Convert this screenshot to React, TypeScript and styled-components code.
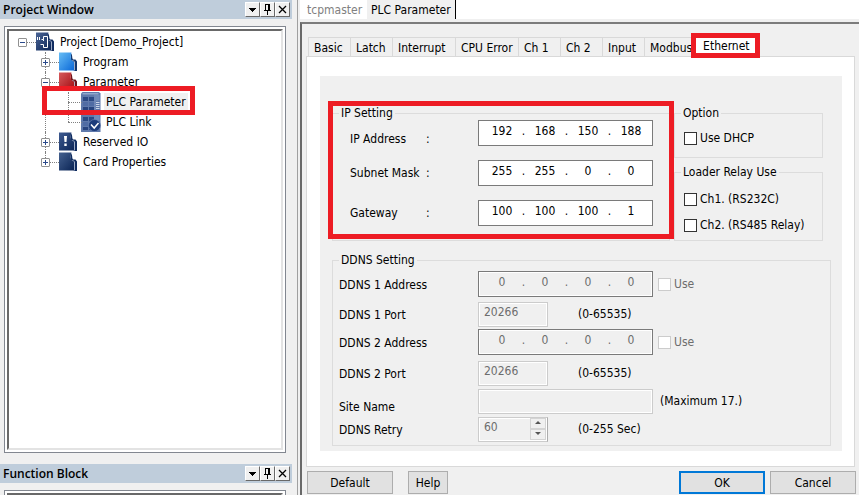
import React from "react";
import styled, { createGlobalStyle, css } from "styled-components";

const Global = createGlobalStyle`
  * { box-sizing: border-box; }
  html, body, #root { height: 100%; }
  body {
    margin: 0;
    background: #f0f0f0;
    color: #000;
    font: 12px/14px "DejaVu Sans Condensed", "DejaVu Sans", sans-serif;
    overflow: hidden;
  }
  button, input { font: inherit; color: inherit; }
`;

const Window = styled.div`
  display: flex;
  height: 100%;
`;

/* ---------- docked panels ---------- */

const Sidebar = styled.aside`
  flex: 0 0 298px;
  display: flex;
  flex-direction: column;
  gap: 11px;
  padding-right: 5px;
  border-right: 1px solid #a0a0a0;
`;

const Dock = styled.section<{ $collapsed?: boolean }>`
  flex: ${(p) => (p.$collapsed ? "0 0 31px" : "1 1 0")};
  min-height: 0;
  overflow: hidden;
  display: flex;
  flex-direction: column;
`;

const DockTitle = styled.header`
  flex: none;
  display: flex;
  align-items: center;
  height: 19px;
  padding: 0 2px 0 3px;
  background: #bfcddb;

  h2 {
    flex: 1;
    margin: 0;
    font: 600 12px/18px "Open Sans", sans-serif;
  }
`;

const DockButton = styled.button`
  display: flex;
  align-items: center;
  justify-content: center;
  width: 15px;
  height: 15px;
  padding: 0;
  background: #f0f0f0;
  border: 1px solid;
  border-color: #fff #696969 #696969 #fff;
`;

const DockFrame = styled.div`
  flex: 1;
  min-height: 0;
  margin: 7px 6px 0 4px;
  padding: 2px;
  background: #fff;
  border: 1px solid #828790;
`;

const DockBody = styled.div`
  height: 100%;
  min-height: 20px;
  padding: 1px 2px;
  background: #fff;
  border: 2px solid;
  border-color: #696969 #e3e3e3 #e3e3e3 #696969;
`;

/* ---------- project tree ---------- */

const Tree = styled.ul`
  margin: 0;
  padding: 0;
  list-style: none;
`;

const TreeRow = styled.li`
  display: flex;
  align-items: center;
  height: 20px;
`;

type Line = "none" | "full" | "upper" | "lower";

const Guide = styled.span<{ $line: Line; $branch?: boolean }>`
  position: relative;
  flex: 0 0 23px;
  height: 20px;
  display: flex;
  align-items: center;
  justify-content: center;

  &::before {
    content: "";
    position: absolute;
    left: 11px;
    top: ${(p) => (p.$line === "lower" ? "10px" : "0")};
    bottom: ${(p) => (p.$line === "upper" ? "10px" : "0")};
    border-left: 1px dotted #808080;
    display: ${(p) => (p.$line === "none" ? "none" : "block")};
  }
  &::after {
    content: "";
    position: absolute;
    left: 11px;
    right: -2px;
    top: 10px;
    border-top: 1px dotted #808080;
    display: ${(p) => (p.$branch ? "block" : "none")};
  }
`;

const Expander = styled.button`
  position: relative;
  z-index: 1;
  display: flex;
  width: 9px;
  height: 9px;
  padding: 0;
  background: #fff;
  border: 1px solid #919191;
  border-radius: 1px;
`;

const NodeIcon = styled.svg`
  flex: none;
  width: 20px;
  height: 20px;
  margin-left: 1px;
`;

const NodeLabel = styled.span<{ $selected?: boolean }>`
  margin-left: 3px;
  padding: 2px;
  white-space: nowrap;
  background: ${(p) => (p.$selected ? "#f0f0f0" : "transparent")};
`;

const Highlight = styled.span<{ $inset: string }>`
  position: absolute;
  inset: ${(p) => p.$inset};
  border: 5px solid #ed1c24;
  pointer-events: none;
  z-index: 2;
`;

const Marked = styled.div`
  position: relative;
`;

/* ---------- document area ---------- */

const Workspace = styled.main`
  flex: 1;
  min-width: 0;
  display: flex;
  flex-direction: column;
  padding-left: 2px;
  background: #f0f0f0;
`;

const DocTabs = styled.nav`
  flex: none;
  display: flex;
  height: 19px;
  margin-bottom: 3px;
  padding-left: 3px;
  background: #fff;
`;

const DocTab = styled.button<{ $active?: boolean }>`
  padding: 0 4px;
  border: 0;
  background: ${(p) => (p.$active ? "#f0f0f0" : "#fff")};
  border-right: 1px solid ${(p) => (p.$active ? "#000" : "#fff")};
  color: ${(p) => (p.$active ? "#000" : "#808080")};
`;

const Dialog = styled.form`
  flex: 1;
  min-height: 0;
  display: flex;
  flex-direction: column;
  padding: 13px 4px 1px 4px;
  border: 2px solid #696969;
  border-top-color: #7c7c7c;
  border-width: 2px 0 0 2px;
`;

const TabStrip = styled.div`
  display: flex;
  height: 19px;
  padding-left: 2px;
`;

const Tab = styled.button<{ $active?: boolean; $wide?: boolean }>`
  min-width: ${(p) => (p.$wide ? 63 : 42)}px;
  padding: 2px 5px 0;
  text-align: left;
  white-space: nowrap;
  background: #f0f0f0;
  border: 1px solid #d9d9d9;
  border-width: 1px 0 0 1px;
  ${(p) =>
    p.$active &&
    css`
      position: relative;
      height: 20px;
      margin-left: -4px;
      padding: 0 7px 4px 9px;
      background: #fff;
    `}
`;

const TabPage = styled.div`
  flex: 1;
  min-height: 0;
  padding: 19px 12px 15px 13px;
  background: #fff;
  border: 1px solid #d9d9d9;
`;

const Sheet = styled.div`
  height: 100%;
  padding: 30px 11px 5px 12px;
  background: #f0f0f0;
`;

const UpperGroups = styled.div`
  display: grid;
  grid-template-columns: 1fr 149px;
  column-gap: 4px;
  margin-right: 8px;
`;

const SideGroups = styled.div`
  display: grid;
  grid-template-rows: 52px 76px;
  row-gap: 7px;
`;

const Group = styled.fieldset<{ $top?: number }>`
  min-width: 0;
  height: 100%;
  margin: 0;
  padding: ${(p) => p.$top ?? 0}px 0 0;
  border: 1px solid #dcdcdc;
`;

const Legend = styled.legend`
  margin-left: 6px;
  padding: 0 2px;
  line-height: 14px;
`;

const AddressRow = styled.div`
  display: grid;
  grid-template-columns: 76px 52px 175px;
  height: 26px;
  margin: 0 0 14px 17px;
  align-items: center;
`;

const AddressLabel = styled.span<{ $low?: boolean }>`
  align-self: ${(p) => (p.$low ? "end" : "center")};
  white-space: nowrap;
`;

const DdnsWrap = styled.div`
  height: 193px;
  margin-top: 12px;
`;

const DdnsGrid = styled.div`
  display: grid;
  grid-template-columns: 139px 1fr;
  grid-template-rows: 30px 28px 31px 28px 28px 28px;
  padding-left: 6px;
`;

const DdnsLabel = styled.label<{ $low?: boolean }>`
  align-self: ${(p) => (p.$low ? "end" : "start")};
  line-height: ${(p) => (p.$low ? "18px" : "28px")};
`;

const DdnsCell = styled.div<{ $gap: number }>`
  display: flex;
  align-items: center;
  align-self: start;
  gap: ${(p) => p.$gap}px;
  height: 26px;
  white-space: nowrap;
`;

const IpBox = styled.span<{ $disabled?: boolean }>`
  display: flex;
  flex: 0 0 175px;
  min-width: 0;
  height: 26px;
  padding: 0 0 4px 3px;
  border: 1px solid #7a7a7a;
  background: ${(p) => (p.$disabled ? "#f0f0f0" : "#fff")};
  box-shadow: inset 0 0 0 1px #fff;
  color: ${(p) => (p.$disabled ? "#6d6d6d" : "#000")};
  line-height: 20px;

  i {
    flex: 0 0 3px;
    min-width: 0;
    font-style: normal;
    display: flex;
    justify-content: center;
  }
`;

const Octet = styled.input`
  flex: 0 0 40px;
  width: 40px;
  height: 20px;
  padding: 0;
  border: 0;
  background: transparent;
  text-align: center;
`;

const TextBox = styled.input<{ $wide?: boolean }>`
  width: ${(p) => (p.$wide ? 175 : 70)}px;
  height: 25px;
  padding: 0 5px 4px;
  border: 1px solid #ccc;
  background: #f0f0f0;
  box-shadow: inset 0 0 0 1px #fff;
  color: #6d6d6d;
`;

const Spinner = styled.span`
  display: flex;
  width: 70px;
  height: 25px;
  padding-right: 1px;
  border: 1px solid #ccc;
  border-right-color: #adadad;
  box-shadow: inset 0 0 0 1px #fff;

  input {
    flex: 1;
    min-width: 0;
    padding: 0 5px 4px;
    border: 0;
    background: transparent;
    color: #6d6d6d;
  }
`;

const SpinButtons = styled.span`
  display: grid;
  grid-template-rows: 11px 11px;
  width: 16px;

  button {
    display: flex;
    align-items: center;
    justify-content: center;
    padding: 0;
    border: 1px solid #d4d4d4;
    background: #f0f0f0;
  }
`;

const Check = styled.label<{ $disabled?: boolean }>`
  display: flex;
  align-items: center;
  gap: 3px;
  height: 26px;
  color: ${(p) => (p.$disabled ? "#6d6d6d" : "#000")};

  input {
    appearance: none;
    width: 13px;
    height: 13px;
    margin: 0;
    background: #fff;
    border: 1px solid ${(p) => (p.$disabled ? "#ccc" : "#333")};
  }
  input:checked {
    background: #333;
  }
`;

const CheckList = styled.div`
  padding-left: 9px;
`;

const Footer = styled.footer`
  display: flex;
  align-items: center;
  gap: 15px;
  height: 23px;
  margin: 4px -1px 0 1px;
`;

const PushButton = styled.button<{ $small?: boolean; $primary?: boolean }>`
  width: ${(p) => (p.$small ? 40 : 86)}px;
  height: 23px;
  padding: 0;
  background: #e1e1e1;
  border: ${(p) => (p.$primary ? "2px solid #0078d7" : "1px solid #adadad")};
`;

const FooterEnd = styled.div`
  display: flex;
  gap: 5px;
  margin-left: auto;
`;

/* ---------- pieces ---------- */

function DockHeader({ title }: { title: string }) {
  return (
    <DockTitle>
      <h2>{title}</h2>
      <DockButton type="button" aria-label={`${title} menu`}>
        <svg width="11" height="11"><path d="M2 4h7v1H8v1H7v1H6v1H5V7H4V6H3V5H2z" /></svg>
      </DockButton>
      <DockButton type="button" aria-label={`Pin ${title}`}>
        <svg width="11" height="11" shapeRendering="crispEdges">
          <path d="M3 0h5v6h1v1H6v4H5V7H2V6h1zM4 1v5h2V1z" fillRule="evenodd" />
        </svg>
      </DockButton>
      <DockButton type="button" aria-label={`Close ${title}`}>
        <svg width="11" height="11"><path d="M2 2l7 7M9 2l-7 7" stroke="#000" strokeWidth="1.3" /></svg>
      </DockButton>
    </DockTitle>
  );
}

type IconKind = "project" | "program" | "parameter" | "plc" | "link" | "reserved" | "card";

const folderColors: Record<string, [string, string, string]> = {
  project: ["#4a6495", "#0c2556", "#102c60"],
  program: ["#67bdf5", "#0a68d8", "#12366e"],
  parameter: ["#d65a5c", "#a30a10", "#6e1219"],
  reserved: ["#3e5b91", "#0c2556", "#102c60"],
  card: ["#45618f", "#0a2455", "#102c60"],
};

function TreeIcon({ kind }: { kind: IconKind }) {
  if (kind === "plc" || kind === "link") {
    return (
      <NodeIcon viewBox="0 0 20 20" aria-hidden="true">
        <path d="M0 1.500 1.500 0H18L19.500 1.500V20H0z" fill="#5f79ab" />
        <path d="M1.500 1h16v1.500h-16z" fill="#93a7cb" />
        <path d="M2 5h5v4H2zM8 5h5v4H8z" fill="#2c4984" />
        <path d="M2 10h5v4H2zM8 10h5v4H8z" fill="#506ca4" />
        <path d="M2 15h5v3H2zM8 15h5v3H8z" fill="#28447f" />
        <path d="M14 3v17" stroke="#8299c3" />
        <path d="M15 10.500h3.500M15 12.500h3.500M15 14.500h3.500M15 16.500h3.500" stroke="#c9d4e8" />
        <path d="M15 3h3.500v6H15z" fill="#718bb9" />
        {kind === "link" && (
          <>
            <circle cx="13.500" cy="13.500" r="6" fill="#1c3c7c" stroke="#6f87b5" strokeWidth=".6" />
            <path d="M10 12.500l3.200 3.500 4.300-5" fill="none" stroke="#fff" strokeWidth="1.500" />
          </>
        )}
      </NodeIcon>
    );
  }
  const [light, dark, back] = folderColors[kind];
  return (
    <NodeIcon viewBox="0 0 20 20" aria-hidden="true">
      <defs>
        <linearGradient id={`fill-${kind}`} x1="0" y1="0" x2="1" y2="1">
          <stop offset="0" stopColor={light} />
          <stop offset="1" stopColor={dark} />
        </linearGradient>
      </defs>
      <path d="M13 1.500C15 3 13.500 7 15.500 7.500h2L19 9.500V19h-3L13 9z" fill={back} />
      <path d="M13.500 8.800h2l1 1.200v8.500" fill="none" stroke="#c3cde0" strokeWidth=".8" />
      <path d="M1 .5H13.500C12.500 4.500 12.500 8 14.500 8.800l1.500 1.400v8.300H1z" fill={`url(#fill-${kind})`} />
      {kind === "project" && (
        <path d="M2.500 5v3M4.500 5v3M6.500 7.500h2v-3h4v11h-4v-3h-3M8.500 7.500v1.500" fill="none" stroke="#fff" />
      )}
      {kind === "reserved" && <path d="M6 4h3l-.5 6h-2zM6.300 11.500h2.400v2.500H6.300z" fill="#fff" />}
    </NodeIcon>
  );
}

interface NodeData {
  label: string;
  icon: IconKind;
  guides: Line[];
  toggle?: "+" | "-";
  selected?: boolean;
}

const nodes: NodeData[] = [
  { label: "Project [Demo_Project]", icon: "project", guides: ["none"], toggle: "-" },
  { label: "Program", icon: "program", guides: ["none", "full"], toggle: "+" },
  { label: "Parameter", icon: "parameter", guides: ["none", "full"], toggle: "-" },
  { label: "PLC Parameter", icon: "plc", guides: ["none", "full", "full"], selected: true },
  { label: "PLC Link", icon: "link", guides: ["none", "full", "upper"] },
  { label: "Reserved IO", icon: "reserved", guides: ["none", "full"], toggle: "+" },
  { label: "Card Properties", icon: "card", guides: ["none", "upper"], toggle: "+" },
];

function ProjectTree() {
  return (
    <Marked>
      <Tree>
        {nodes.map((n) => (
          <TreeRow key={n.label}>
            {n.guides.map((line, i) => {
              const last = i === n.guides.length - 1;
              return (
                <Guide key={i} $line={line} $branch={last}>
                  {last && n.toggle && (
                    <Expander type="button" aria-label={`Toggle ${n.label}`}>
                      <svg width="7" height="7" shapeRendering="crispEdges">
                        <path d={n.toggle === "+" ? "M1 3h5v1H1zM3 1h1v5H3z" : "M1 3h5v1H1z"} fill="#2b4a8b" />
                      </svg>
                    </Expander>
                  )}
                </Guide>
              );
            })}
            <TreeIcon kind={n.icon} />
            <NodeLabel $selected={n.selected}>{n.label}</NodeLabel>
          </TreeRow>
        ))}
      </Tree>
      <Highlight $inset="54px 84px 57px 31px" />
    </Marked>
  );
}

function IpField({ label, parts, disabled }: { label: string; parts: number[]; disabled?: boolean }) {
  return (
    <IpBox $disabled={disabled} role="group" aria-label={label}>
      {parts.map((v, i) => (
        <React.Fragment key={i}>
          {i > 0 && <i>.</i>}
          <Octet defaultValue={v} disabled={disabled} aria-label={`${label} part ${i + 1}`} />
        </React.Fragment>
      ))}
    </IpBox>
  );
}

function CheckBox({ label, disabled }: { label: string; disabled?: boolean }) {
  return (
    <Check $disabled={disabled}>
      <input type="checkbox" disabled={disabled} />
      {label}
    </Check>
  );
}

const addresses = [
  { label: "IP Address", parts: [192, 168, 150, 188] },
  { label: "Subnet Mask", parts: [255, 255, 0, 0] },
  { label: "Gateway", parts: [100, 100, 100, 1] },
];

const tabs = ["Basic", "Latch", "Interrupt", "CPU Error", "Ch 1", "Ch 2", "Input", "Modbus"];

function DdnsSection() {
  return (
    <DdnsWrap>
      <Group $top={4}>
        <Legend>DDNS Setting</Legend>
        <DdnsGrid>
          <DdnsLabel as="span">DDNS 1 Address</DdnsLabel>
          <DdnsCell $gap={5}>
            <IpField label="DDNS 1 Address" parts={[0, 0, 0, 0]} disabled />
            <CheckBox label="Use" disabled />
          </DdnsCell>
          <DdnsLabel htmlFor="port1">DDNS 1 Port</DdnsLabel>
          <DdnsCell $gap={30}>
            <TextBox id="port1" defaultValue="20266" disabled />
            <span>(0-65535)</span>
          </DdnsCell>
          <DdnsLabel as="span">DDNS 2 Address</DdnsLabel>
          <DdnsCell $gap={5}>
            <IpField label="DDNS 2 Address" parts={[0, 0, 0, 0]} disabled />
            <CheckBox label="Use" disabled />
          </DdnsCell>
          <DdnsLabel htmlFor="port2">DDNS 2 Port</DdnsLabel>
          <DdnsCell $gap={30}>
            <TextBox id="port2" defaultValue="20266" disabled />
            <span>(0-65535)</span>
          </DdnsCell>
          <DdnsLabel htmlFor="site" $low>Site Name</DdnsLabel>
          <DdnsCell $gap={7}>
            <TextBox id="site" $wide disabled />
            <span>(Maximum 17.)</span>
          </DdnsCell>
          <DdnsLabel htmlFor="retry">DDNS Retry</DdnsLabel>
          <DdnsCell $gap={30}>
            <Spinner>
              <input id="retry" defaultValue="60" disabled />
              <SpinButtons>
                <button type="button" disabled aria-label="Increase retry">
                  <svg width="6" height="4"><path d="M3 0l3 3H0z" fill="#555" /></svg>
                </button>
                <button type="button" disabled aria-label="Decrease retry">
                  <svg width="6" height="4"><path d="M0 0h6L3 3z" fill="#555" /></svg>
                </button>
              </SpinButtons>
            </Spinner>
            <span>(0-255 Sec)</span>
          </DdnsCell>
        </DdnsGrid>
      </Group>
    </DdnsWrap>
  );
}

export default function App() {
  return (
    <>
      <Global />
      <Window>
        <Sidebar>
          <Dock>
            <DockHeader title="Project Window" />
            <DockFrame>
              <DockBody>
                <ProjectTree />
              </DockBody>
            </DockFrame>
          </Dock>
          <Dock $collapsed>
            <DockHeader title="Function Block" />
            <DockFrame>
              <DockBody />
            </DockFrame>
          </Dock>
        </Sidebar>

        <Workspace>
          <DocTabs>
            <DocTab type="button">tcpmaster</DocTab>
            <DocTab type="button" $active>PLC Parameter</DocTab>
          </DocTabs>
          <Dialog onSubmit={(e) => e.preventDefault()}>
            <TabStrip>
              {tabs.map((t) => (
                <Tab type="button" key={t} $wide={t.length > 7}>{t}</Tab>
              ))}
              <Tab type="button" $active>
                Ethernet
                <Highlight $inset="-5px -3px -1px -3px" />
              </Tab>
            </TabStrip>
            <TabPage>
              <Sheet>
                <UpperGroups>
                  <Marked>
                    <Group>
                      <Legend>IP Setting</Legend>
                      {addresses.map((a, i) => (
                        <AddressRow key={a.label}>
                          <AddressLabel $low={i === 0}>{a.label}</AddressLabel>
                          <AddressLabel $low={i === 0}>:</AddressLabel>
                          <IpField label={a.label} parts={a.parts} />
                        </AddressRow>
                      ))}
                    </Group>
                    <Highlight $inset="-5px -4px 2px -4px" />
                  </Marked>
                  <SideGroups>
                    <Group $top={5}>
                      <Legend>Option</Legend>
                      <CheckList>
                        <CheckBox label="Use DHCP" />
                      </CheckList>
                    </Group>
                    <Group $top={7}>
                      <Legend>Loader Relay Use</Legend>
                      <CheckList>
                        <CheckBox label="Ch1. (RS232C)" />
                        <CheckBox label="Ch2. (RS485 Relay)" />
                      </CheckList>
                    </Group>
                  </SideGroups>
                </UpperGroups>
                <DdnsSection />
              </Sheet>
            </TabPage>
            <Footer>
              <PushButton type="button">Default</PushButton>
              <PushButton type="button" $small>Help</PushButton>
              <FooterEnd>
                <PushButton type="submit" $primary>OK</PushButton>
                <PushButton type="button">Cancel</PushButton>
              </FooterEnd>
            </Footer>
          </Dialog>
        </Workspace>
      </Window>
    </>
  );
}
